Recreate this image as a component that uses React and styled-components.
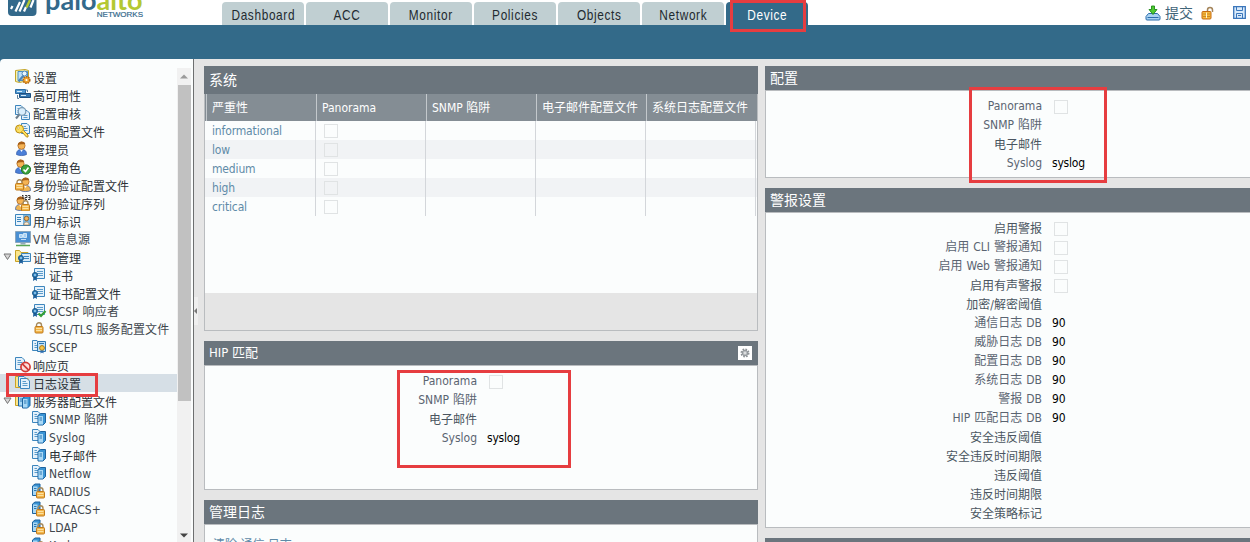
import React from "react";
import styled, { createGlobalStyle, css } from "styled-components";

const Global = createGlobalStyle`
  * { box-sizing: border-box; }
  body {
    margin: 0;
    background: #e5e5e5;
    overflow: hidden;
    font: 12px/18px "DejaVu Sans Condensed", "Noto Sans CJK SC", sans-serif;
    color: #2b3136;
  }
`;

const Page = styled.div`
  position: relative;
  width: 1250px;
  height: 542px;
  overflow: hidden;
  display: flex;
  flex-direction: column;
`;

/* ---------- header ---------- */

const Header = styled.header`
  display: flex;
  align-items: flex-start;
  flex: none;
  height: 25px;
  background: #fff;
`;

const Brand = styled.div`
  display: flex;
  width: 222px;
  height: 25px;
  padding-left: 8px;
  overflow: hidden;
`;

const BrandText = styled.div`
  display: flex;
  flex-direction: column;
  width: 98px;
  margin: -17px 0 0 8px;
`;

const Wordmark = styled.div`
  font: 700 27px/34px Lato, sans-serif;
  letter-spacing: 0.05px;
  color: #33698b;
  height: 27px;
  white-space: nowrap;
`;

const Leaf = styled.span`
  color: #b4c832;
`;

const Subline = styled.div`
  align-self: flex-end;
  font: 8px/10px "Liberation Sans", sans-serif;
  -webkit-text-stroke: 0.2px #33698b;
  color: #33698b;
`;

const Tabs = styled.nav`
  display: flex;
  gap: 2px;
  padding-top: 2px;
`;

const Tab = styled.div`
  width: 82px;
  height: 23px;
  border-radius: 4px 4px 0 0;
  background: ${(p) => (p.$active ? "#336a89" : "#c0cfd2")};
  color: ${(p) => (p.$active ? "#fff" : "#1f2a30")};
  font: 15px/26px "Liberation Sans", sans-serif;
  letter-spacing: 0.8px;
  display: flex;
  justify-content: center;
`;

const TabText = styled.span`
  flex: none;
  transform: scaleX(0.79);
`;

const Actions = styled.div`
  display: flex;
  align-items: center;
  margin-left: auto;
  height: 25px;
  padding-right: 4px;
`;

const Commit = styled.span`
  font-size: 14px;
  color: #3f6478;
  margin: 0 8px 0 4px;
`;

const IconGap = styled.span`
  width: 19px;
`;

const Band = styled.div`
  flex: none;
  height: 34px;
  background: #336a89;
`;

/* ---------- body ---------- */

const Body = styled.div`
  display: flex;
  flex: 1;
  min-height: 0;
  background: #336a89;
`;

const Sidebar = styled.aside`
  display: flex;
  width: 194px;
  padding-top: 9px;
  padding-right: 2px;
  background: #fbfdfd;
  border-right: 1px solid #6d6f70;
  border-top-left-radius: 4px;
  overflow: hidden;
`;

const Tree = styled.div`
  width: 177px;
  overflow: hidden;
`;

const Node = styled.div`
  display: flex;
  align-items: center;
  height: 18px;
  padding-left: ${(p) => (p.$depth ? 31 : 3)}px;
  white-space: nowrap;
  background: ${(p) => (p.$selected ? "#d6dfe6" : "transparent")};
`;

const Twisty = styled.span`
  display: flex;
  width: 12px;
  flex: none;
`;

const NodeText = styled.span`
  margin-left: 2px;
  padding-top: ${(p) => (p.$latin ? 2 : 3)}px;
  color: ${(p) => (p.$latin ? "#40474d" : "#2b3136")};
  letter-spacing: ${(p) => (p.$latin ? "0.15px" : "0")};
`;

const Scroll = styled.div`
  display: flex;
  flex-direction: column;
  align-items: center;
  width: 14px;
  background: #f1f1f1;
`;

const ScrollBtn = styled.div`
  display: flex;
  align-items: center;
  justify-content: center;
  height: 17px;
  flex: none;
  padding-top: ${(p) => p.$drop || 0}px;
`;

const Thumb = styled.div`
  width: 13px;
  height: 316px;
  background: #c1c1c1;
  margin-bottom: auto;
`;

const Splitter = styled.div`
  display: flex;
  width: 10px;
  padding-top: 238px;
  background: #e5e5e5;
`;

const Handle = styled.div`
  display: flex;
  align-items: center;
  width: 4px;
  height: 28px;
  background: #efefef;
`;

const Columns = styled.main`
  display: grid;
  grid-template-columns: 554px 1fr;
  column-gap: 7px;
  flex: 1;
  padding-top: 7px;
  background: #e5e5e5;
`;

const Column = styled.div`
  display: flex;
  flex-direction: column;
  gap: 10px;
  min-width: 0;
`;

const Panel = styled.section`
  display: flex;
  flex-direction: column;
  flex: none;
  height: ${(p) => p.$h}px;
`;

const PanelTitle = styled.h2`
  display: flex;
  align-items: center;
  justify-content: space-between;
  flex: none;
  margin: 0;
  height: ${(p) => (p.$tall ? 28 : 24)}px;
  padding: 0 6px 1px 5px;
  background: #6b757d;
  color: #fff;
  font-size: ${(p) => p.$size || 14}px;
  font-weight: 400;
`;

const GearBtn = styled.span`
  display: flex;
  align-items: center;
  justify-content: center;
  width: 14px;
  height: 14px;
  background: #fff;
`;

const PanelBody = styled.div`
  flex: 1;
  min-height: 0;
  display: flex;
  flex-direction: column;
  background: #fbfdfd;
  border: 1px solid #b9bcbf;
  border-top: ${(p) => (p.$flush ? "none" : "1px solid #b9bcbf")};
  border-right-width: ${(p) => (p.$open ? 0 : 1)}px;
  padding-top: ${(p) => p.$pad || 0}px;
`;

const gridCols = css`
  display: grid;
  grid-template-columns: 110px 110px 110px 110px 110px;
  padding-left: 1px;
`;

const HeadRow = styled.div`
  ${gridCols}
  height: 27px;
  flex: none;
  background: #848d94;
  color: #fff;
  line-height: 28px;
`;

const HeadCell = styled.div`
  border-left: 1px solid #c3c8cc;
  padding-left: 5px;
  white-space: nowrap;
`;

const Row = styled.div`
  ${gridCols}
  height: 19px;
  background: ${(p) => (p.$alt ? "#f1f3f5" : "#fbfdfd")};
`;

const Cell = styled.div`
  display: flex;
  align-items: center;
  border-right: 1px solid #d3d6da;
  padding-left: 6px;
  color: #5f8ba8;
  letter-spacing: -0.15px;
`;

const Footer = styled.div`
  height: 37px;
  margin-top: auto;
  background: #e5e5e5;
`;

const Check = styled.span`
  display: block;
  width: 14px;
  height: 14px;
  margin: ${(p) => p.$m || "0"};
  border: 1px solid #e0e3e4;
`;

const Form = styled.div`
  display: grid;
  grid-template-columns: ${(p) => p.$label}px 1fr;
  grid-auto-rows: 19px;
  column-gap: 10px;
  line-height: 19px;
  white-space: nowrap;
`;

const Label = styled.span`
  text-align: right;
  color: ${(p) => (p.$latin ? "#5a6471" : "#4a5560")};
  padding-top: ${(p) => (p.$latin ? 0 : 1)}px;
  word-spacing: ${(p) => (p.$latin ? 0.6 : 0)}px;
`;

const Value = styled.span`
  color: #000;
  letter-spacing: -0.2px;
`;

const CleanLink = styled.a`
  padding: 11px 0 0 8px;
  color: #5f8ba8;
  line-height: 19px;
`;

const Mark = styled.div`
  position: absolute;
  left: ${(p) => p.$x}px;
  top: ${(p) => p.$y}px;
  width: ${(p) => p.$w}px;
  height: ${(p) => p.$h}px;
  border: 3px solid #e63d40;
`;

/* ---------- icons ---------- */

const IconSvg = styled.svg`
  display: block;
  flex: none;
`;

const Svg = ({ w = 16, h = 16, children }) => (
  <IconSvg width={w} height={h} viewBox={`0 0 ${w} ${h}`} fill="none">
    {children}
  </IconSvg>
);

const Sheet = ({ x = 0, y = 0, w = 10, h = 11 }) => (
  <g transform={`translate(${x} ${y})`}>
    <path d={`M.5 .5H${w - 3}L${w - 0.5} 3V${h - 0.5}H.5Z`} fill="#e4f1fb" stroke="#3d86bd" />
    <path d={`M2.5 3.5H${w - 4}M2.5 5.5H${w - 2.5}M2.5 7.5H${w - 2.5}`} stroke="#5b9ccb" />
  </g>
);

const Lock = ({ x = 0, y = 0 }) => (
  <g transform={`translate(${x} ${y})`}>
    <path d="M2 5V3.2a2.5 2.5 0 0 1 5 0V5" stroke="#a58a5c" strokeWidth="1.4" />
    <rect x=".5" y="4.5" width="8" height="6.5" rx="1" fill="#f3b64a" stroke="#c07a1c" />
    <path d="M1.5 6.5h6M1.5 8.5h6" stroke="#fbe0a0" />
  </g>
);

const Person = ({ x = 0, y = 0, body = "#4a7fd8" }) => (
  <g transform={`translate(${x} ${y})`}>
    <path d="M.5 13.5c0-4 2-5 5-5s5 1 5 5c-2 1.400-8 1.400-10 0Z" fill={body} stroke="#3159a8" strokeWidth=".7" />
    <path d="M4 8.500l1.500 2.500L7 8.500Z" fill="#fff" />
    <circle cx="5.500" cy="4.700" r="3.600" fill="#f5b455" stroke="#a8601a" strokeWidth=".7" />
    <path d="M1.800 4.500C1.500 0 8-.8 9.300 2.800 7 3.800 4 2.800 1.800 4.500Z" fill="#a8601a" />
  </g>
);

const CertSheet = () => (
  <>
    <path d="M3.500 1.500h10v10h-10z" fill="#e4f1fb" stroke="#3d86bd" />
    <path d="M6 4.500h6M6 6.500h6M7 8.500h5" stroke="#5b9ccb" />
  </>
);

const Ribbon = ({ x = 0, y = 0 }) => (
  <g transform={`translate(${x} ${y})`}>
    <path d="M1.500 4L1 9l2-1.300L5 9 4.500 4Z" fill="#1d5f9c" />
    <circle cx="3" cy="3" r="2.600" fill="#2c7cba" stroke="#15507f" strokeWidth=".8" />
    <circle cx="3" cy="3" r="1" fill="#9fd0f0" />
  </g>
);

const Server = ({ x = 0, y = 0 }) => (
  <g transform={`translate(${x} ${y})`}>
    <path d="M.5 2.500L3 .5h5v9L5.500 12H.5Z" fill="#3a94d4" stroke="#1d639e" />
    <path d="M1 3h4.500v8.500H1Z" fill="#a9d8f5" />
    <path d="M2 5h2.500M2 7h2.500" stroke="#2b79b4" />
  </g>
);

const Folder = () => (
  <path d="M.5 12.500V1.500h4l1.500 2h7v9Z" fill="#fbe68b" stroke="#c9a227" />
);

const ICONS = {
  setup: (
    <>
      <path d="M.5 1.500L10 .5l3.500 1v10l-9 2-4-1Z" fill="#f8f2b0" stroke="#c3a52a" />
      <path d="M3 2.500h9.500v9H3Z" fill="#bfe0f7" stroke="#4a90c8" />
      <path d="M3.500 12.500L9 6" stroke="#4c86b8" strokeWidth="2.200" />
      <circle cx="9.500" cy="4.500" r="2.500" fill="#e9f5fd" stroke="#4c86b8" />
      <circle cx="11.500" cy="11" r="3.300" fill="#f0a32c" stroke="#b06612" strokeDasharray="1.600 .8" strokeWidth="1.500" />
      <circle cx="11.500" cy="11" r="1.100" fill="#fff" />
    </>
  ),
  ha: (
    <>
      <path d="M.5 2.500h10v4H.5Z" fill="#4f97d0" stroke="#2b6ca4" />
      <path d="M4.500 6.500h11v4h-11Z" fill="#3476b0" stroke="#1c4f80" />
      <path d="M2 4.500h5M6 8.500h5" stroke="#d5ecfb" />
      <path d="M2.500 8v3.500H4M12.500 5V3H11" stroke="#5a7f9c" />
    </>
  ),
  audit: (
    <>
      <Sheet x={0} y={0} w={9} h={10} />
      <Sheet x={6} y={5} w={9} h={10} />
      <circle cx="7" cy="6.500" r="3.800" fill="#d8eefc" stroke="#7c9db5" strokeWidth="1.300" />
      <path d="M4.300 9.500L1 13.500" stroke="#6e7f8c" strokeWidth="2" />
    </>
  ),
  password: (
    <>
      <Sheet x={6} y={0} w={9} h={11} />
      <circle cx="4.500" cy="6" r="4" fill="#fce060" stroke="#bb8d13" />
      <circle cx="3.200" cy="5" r="1.100" fill="#fff" stroke="#bb8d13" strokeWidth=".5" />
      <path d="M6.500 8.500l5 5.500h1.500v-2L8.500 7.500" fill="#fce060" stroke="#bb8d13" />
    </>
  ),
  admin: <Person x={1} y={0} />,
  role: (
    <>
      <Person x={0} y={0} body="#4a7fd8" />
      <circle cx="11" cy="10.500" r="4.600" fill="#3da33d" stroke="#1d7526" />
      <path d="M8.500 10.500l2 2 3-4" stroke="#fff" strokeWidth="1.600" />
    </>
  ),
  authProfile: (
    <>
      <Person x={5} y={0} body="#f0b552" />
      <Lock x={0} y={2} />
    </>
  ),
  authSeq: (
    <>
      <Person x={0} y={1} body="#f0b552" />
      <Lock x={6} y={5} />
      <path d="M7 1l1-1v4M10 .5h2v2h-2v2h2M13 .5h2v4h-2M13.500 2.500H15" stroke="#111" strokeWidth=".8" />
    </>
  ),
  userId: (
    <>
      <path d="M.5 1.500h15v11H.5Z" fill="#e7f4fd" stroke="#3d86bd" />
      <path d="M8 2h7v10H8Z" fill="#7ab6e0" />
      <path d="M2 4.500h4M2 6.500h4M2 8.500h4" stroke="#3d86bd" />
      <circle cx="11.500" cy="5.500" r="2.200" fill="#f3b55c" stroke="#8c5216" strokeWidth=".8" />
      <path d="M8.800 12c0-4 5.400-4 5.400 0Z" fill="#fbeed7" stroke="#8c5216" strokeWidth=".5" />
    </>
  ),
  vm: (
    <>
      <path d="M.5 .5h15v11H.5Z" fill="#4a8fd2" stroke="#8aa6bd" />
      <path d="M4.500 3.500h3v3h-3zM8.500 2.500h3v4h-3zM6 8.500h5" fill="#a7d0f3" stroke="#e2f1fc" strokeWidth=".8" />
      <path d="M5.500 12h5v1.500h-5Z" fill="#93a9ba" />
      <path d="M1 14.500h14" stroke="#58a555" strokeWidth="1.500" />
    </>
  ),
  certMgmt: (
    <>
      <Folder />
      <path d="M6.500 4.500h9v8h-9z" fill="#d4eafa" stroke="#3d86bd" />
      <path d="M9 7.500h5M9 9.500h5" stroke="#3d86bd" />
      <Ribbon x={3} y={6} />
    </>
  ),
  cert: (
    <>
      <CertSheet />
      <Ribbon x={1} y={5} />
    </>
  ),
  ocsp: (
    <>
      <CertSheet />
      <Ribbon x={1} y={5} />
      <path d="M7.500 10.500l2.500 2.500 4.500-5" stroke="#35a035" strokeWidth="2.200" />
    </>
  ),
  ssl: <Lock x={3.5} y={1} />,
  scep: (
    <>
      <Sheet x={1} y={1} w={8} h={11} />
      <path d="M6.500 2.500h8v10h-8z" fill="#bfe0f7" stroke="#2f78b2" />
      <path d="M8 4.500h5" stroke="#2f78b2" />
      <circle cx="11" cy="9" r="2.400" fill="#f6c64a" stroke="#a87814" />
      <path d="M9.500 11.500v3l1.500-1 1.500 1v-3" fill="#2c6db0" />
    </>
  ),
  response: (
    <>
      <Sheet x={0} y={0} w={10} h={13} />
      <circle cx="10.500" cy="10" r="4.600" fill="#fbdedd" stroke="#d23a36" strokeWidth="1.700" />
      <path d="M7.300 6.800l6.400 6.400" stroke="#d23a36" strokeWidth="1.700" />
    </>
  ),
  log: (
    <>
      <Folder />
      <Sheet x={3} y={1} w={9} h={11} />
      <Sheet x={5} y={3} w={10} h={11} />
    </>
  ),
  servers: (
    <>
      <Folder />
      <Server x={3} y={1} />
      <Server x={7} y={3} />
    </>
  ),
  server: (
    <>
      <Sheet x={1} y={0} w={9} h={12} />
      <Server x={6.5} y={2} />
    </>
  ),
  serverLock: (
    <>
      <Server x={1} y={0.5} />
      <Lock x={5} y={4} />
    </>
  ),
};

const LogoMark = () => (
  <Svg w={29} h={17}>
    <path d="M0 0H28.500V12a4 4 0 0 1-4 4H4a4 4 0 0 1-4-4Z" fill="#33698b" />
    <path
      d="M3 9L4.500 6M7.500 11.500L12 2M11.500 11.500L16.500 0M16 11.500L18 7M22.500 7.500L25.500 0"
      stroke="#fff"
      strokeWidth="2.200"
    />
    <path d="M18.500 7.500L22 0" stroke="#b4c832" strokeWidth="2.400" />
  </Svg>
);

const CommitIcon = () => (
  <Svg>
    <path d="M3.500 8.500h9l2.500 3v2.500q0 1-1 1H2q-1 0-1-1v-2.500Z" fill="#a9d2f2" stroke="#2b6dac" />
    <path d="M2.500 12.500h11" stroke="#2b6dac" />
    <path d="M6.500 1h3v3.500H12L8 9.500 4 4.500h2.500Z" fill="#4ecb2f" stroke="#1f8a1a" strokeWidth=".9" />
  </Svg>
);

const OpenLockIcon = () => (
  <Svg w={13} h={14}>
    <path d="M6.500 6V4a2.500 2.500 0 0 1 5 0v2" stroke="#a4845a" strokeWidth="1.500" />
    <rect x="1" y="5.500" width="9" height="7.500" rx="1" fill="#f7b83a" stroke="#c46a13" />
    <path d="M2 8h7M2 10.500h7" stroke="#c98a28" />
    <path d="M5.500 6.500v5.500" stroke="#fff3cc" />
  </Svg>
);

const SaveIcon = () => (
  <Svg w={13} h={13}>
    <path d="M.7.7h11.600v11.600H.7Z" fill="#d9eafa" stroke="#3b76bb" strokeWidth="1.300" />
    <path d="M3.500 1v3.500h6V1M3.500 12V7.500h6V12M5 9.500h3" stroke="#3b76bb" />
  </Svg>
);

const Gear = () => (
  <Svg w={10} h={10}>
    <circle cx="5" cy="5" r="3.800" stroke="#8d9296" strokeWidth="1.400" strokeDasharray="1.700 1.280" />
    <circle cx="5" cy="5" r="2.800" fill="#b9bdc0" stroke="#8d9296" />
    <circle cx="5" cy="5" r="1" fill="#e8e8e8" />
  </Svg>
);

const Triangle = ({ up }) => (
  <Svg w={8} h={5}>
    <path d={up ? "M0 4.500L4 .5l4 4Z" : "M0 .5h8L4 4.500Z"} fill={up ? "#9a9a9a" : "#444"} />
  </Svg>
);

/* ---------- data ---------- */

const TABS = ["Dashboard", "ACC", "Monitor", "Policies", "Objects", "Network", "Device"];

const TREE = [
  ["setup", "设置"],
  ["ha", "高可用性"],
  ["audit", "配置审核"],
  ["password", "密码配置文件"],
  ["admin", "管理员"],
  ["role", "管理角色"],
  ["authProfile", "身份验证配置文件"],
  ["authSeq", "身份验证序列"],
  ["userId", "用户标识"],
  ["vm", "VM 信息源"],
  ["certMgmt", "证书管理", 0, true],
  ["cert", "证书", 1],
  ["cert", "证书配置文件", 1],
  ["ocsp", "OCSP 响应者", 1],
  ["ssl", "SSL/TLS 服务配置文件", 1],
  ["scep", "SCEP", 1],
  ["response", "响应页"],
  ["log", "日志设置"],
  ["servers", "服务器配置文件", 0, true],
  ["server", "SNMP 陷阱", 1],
  ["server", "Syslog", 1],
  ["server", "电子邮件", 1],
  ["server", "Netflow", 1],
  ["serverLock", "RADIUS", 1],
  ["serverLock", "TACACS+", 1],
  ["serverLock", "LDAP", 1],
  ["serverLock", "Kerberos", 1],
];

const HEADS = ["严重性", "Panorama", "SNMP 陷阱", "电子邮件配置文件", "系统日志配置文件"];
const LEVELS = ["informational", "low", "medium", "high", "critical"];
const FORWARD = [
  ["Panorama", true],
  ["SNMP 陷阱"],
  ["电子邮件"],
  ["Syslog", "syslog"],
];
const ALARMS = [
  ["启用警报", true],
  ["启用 CLI 警报通知", true],
  ["启用 Web 警报通知", true],
  ["启用有声警报", true],
  ["加密/解密阈值"],
  ["通信日志 DB", "90"],
  ["威胁日志 DB", "90"],
  ["配置日志 DB", "90"],
  ["系统日志 DB", "90"],
  ["警报 DB", "90"],
  ["HIP 匹配日志 DB", "90"],
  ["安全违反阈值"],
  ["安全违反时间期限"],
  ["违反阈值"],
  ["违反时间期限"],
  ["安全策略标记"],
];

const hasLatin = (text) => /[A-Za-z]/.test(text);

const Fields = ({ rows, label }) => (
  <Form $label={label}>
    {rows.map(([name, value]) => (
      <React.Fragment key={name}>
        <Label $latin={hasLatin(name)}>{name}</Label>
        {value === true ? <Check $m="3px 0 0 2px" /> : <Value>{value}</Value>}
      </React.Fragment>
    ))}
  </Form>
);

export default function App() {
  return (
    <Page>
      <Global />
      <Header>
        <Brand>
          <LogoMark />
          <BrandText>
            <Wordmark>
              palo<Leaf>alto</Leaf>
            </Wordmark>
            <Subline>NETWORKS</Subline>
          </BrandText>
        </Brand>
        <Tabs>
          {TABS.map((t) => (
            <Tab key={t} $active={t === "Device"}>
              <TabText>{t}</TabText>
            </Tab>
          ))}
        </Tabs>
        <Actions>
          <CommitIcon />
          <Commit>提交</Commit>
          <OpenLockIcon />
          <IconGap />
          <SaveIcon />
        </Actions>
      </Header>
      <Band />
      <Body>
        <Sidebar>
          <Tree>
            {TREE.map(([icon, text, depth, open]) => (
              <Node key={text} $depth={depth} $selected={icon === "log"}>
                {!depth && (
                  <Twisty>
                    {open && (
                      <Svg w={9} h={8}>
                        <path d="M1 1h7L4.500 6.500Z" fill="#d5d5d5" stroke="#777" />
                      </Svg>
                    )}
                  </Twisty>
                )}
                <Svg>{ICONS[icon]}</Svg>
                <NodeText $latin={hasLatin(text)}>{text}</NodeText>
              </Node>
            ))}
          </Tree>
          <Scroll>
            <ScrollBtn><Triangle up /></ScrollBtn>
            <Thumb />
            <ScrollBtn $drop={3}><Triangle /></ScrollBtn>
          </Scroll>
        </Sidebar>
        <Splitter>
          <Handle>
            <Svg w={3} h={6}><path d="M3 0v6L0 3Z" fill="#777" /></Svg>
          </Handle>
        </Splitter>
        <Columns>
          <Column>
            <Panel $h={265}>
              <PanelTitle $tall>系统</PanelTitle>
              <PanelBody $flush>
                <HeadRow>
                  {HEADS.map((h) => <HeadCell key={h}>{h}</HeadCell>)}
                </HeadRow>
                {LEVELS.map((l, i) => (
                  <Row key={l} $alt={i % 2 === 1}>
                    <Cell>{l}</Cell>
                    <Cell><Check $m="1px 0 0 2px" /></Cell>
                    <Cell />
                    <Cell />
                    <Cell />
                  </Row>
                ))}
                <Footer />
              </PanelBody>
            </Panel>
            <Panel $h={149}>
              <PanelTitle $size={13}>
                HIP 匹配
                <GearBtn><Gear /></GearBtn>
              </PanelTitle>
              <PanelBody $pad={6}>
                <Fields rows={FORWARD} label={272} />
              </PanelBody>
            </Panel>
            <Panel $h={60}>
              <PanelTitle>管理日志</PanelTitle>
              <PanelBody>
                <CleanLink>清除 通信 日志</CleanLink>
              </PanelBody>
            </Panel>
          </Column>
          <Column>
            <Panel $h={112}>
              <PanelTitle>配置</PanelTitle>
              <PanelBody $pad={6} $open>
                <Fields rows={FORWARD} label={276} />
              </PanelBody>
            </Panel>
            <Panel $h={340}>
              <PanelTitle>警报设置</PanelTitle>
              <PanelBody $pad={6} $open>
                <Fields rows={ALARMS} label={276} />
              </PanelBody>
            </Panel>
            <Panel $h={40}>
              <PanelTitle />
            </Panel>
          </Column>
        </Columns>
      </Body>
      <Mark $x={730} $y={0} $w={76} $h={32} />
      <Mark $x={6} $y={373} $w={92} $h={24} />
      <Mark $x={397} $y={370} $w={174} $h={98} />
      <Mark $x={969} $y={87} $w={138} $h={96} />
    </Page>
  );
}
